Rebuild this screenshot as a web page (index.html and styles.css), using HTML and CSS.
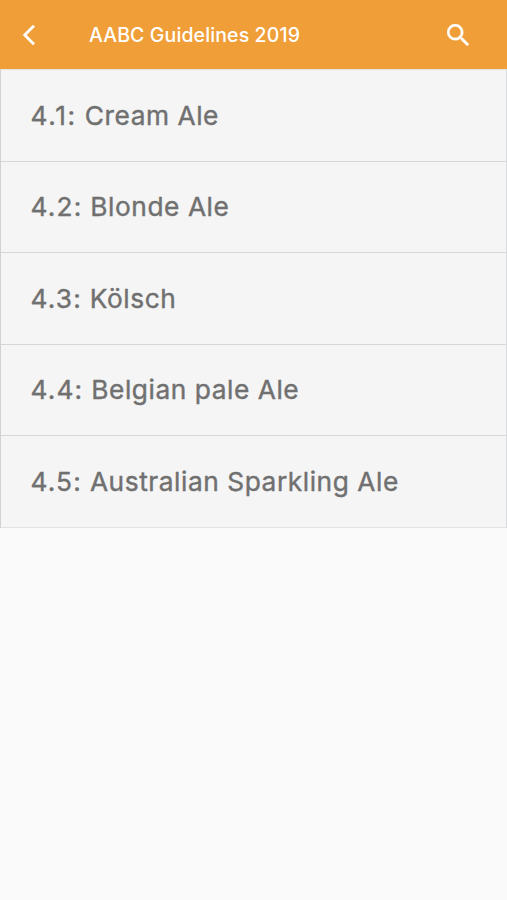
FILE: index.html
```html
<!DOCTYPE html>
<html lang="en">
<head>
<meta charset="utf-8">
<title>AABC Guidelines 2019</title>
<link rel="stylesheet" href="styles.css">
</head>
<body>
<header class="bar">
  <svg class="back" viewBox="0 0 14 22" aria-hidden="true"><path d="M12 1.8 2.7 11l9.3 9.2"/></svg>
  <h1 class="title">AABC Guidelines 2019</h1>
  <svg class="search" viewBox="3 3 17.49 17.49" aria-hidden="true"><path d="M15.5 14h-.79l-.28-.27A6.471 6.471 0 0 0 16 9.5 6.5 6.5 0 1 0 9.5 16c1.61 0 3.09-.59 4.23-1.57l.27.28v.79l5 4.99L20.49 19l-4.99-5zm-6 0C7.01 14 5 11.99 5 9.5S7.01 5 9.5 5 14 7.01 14 9.5 11.99 14 9.5 14z"/></svg>
</header>
<ul class="list">
  <li class="row"><span class="label"><span class="number narrow">4.1:</span> Cream Ale</span></li>
  <li class="row"><span class="label"><span class="number">4.2:</span> Blonde Ale</span></li>
  <li class="row"><span class="label"><span class="number">4.3:</span> Kölsch</span></li>
  <li class="row"><span class="label"><span class="number">4.4:</span> Belgian pale Ale</span></li>
  <li class="row"><span class="label"><span class="number">4.5:</span> Australian Sparkling Ale</span></li>
</ul>
</body>
</html>
```
FILE: styles.css
```css
* { box-sizing: border-box; }
body { margin: 0; min-height: 900px; background: #fafafa; font-family: Inter, sans-serif; }
.bar { display: flex; align-items: center; height: 69px; padding: 1px 38px 0 22px; background: #f09e38; color: #fff; }
.back { width: 14px; height: 22px; fill: none; stroke: #fff; stroke-width: 2.8; }
.title { margin: 0 auto 0 53px; font-size: 19.5px; font-weight: 500; line-height: 24px; letter-spacing: .12px; white-space: nowrap; }
.search { width: 22px; height: 22px; fill: #fff; stroke: #fff; stroke-width: .25; }
.list { margin: 0; padding: 0; list-style: none; border-left: 1px solid #d2d2d2; border-right: 1px solid #d8dcdc; border-top: 1px solid #e4e0dc; }
.row { display: flex; align-items: center; height: 91.6px; padding: 0 29.5px; background: #f5f5f5; border-bottom: 1px solid #d6d6d6; }
.row:last-child { border-bottom-color: #e2e2e2; }
.label { padding-top: .6px; font-size: 26.3px; font-weight: 400; line-height: 32px; letter-spacing: .55px; color: #707070; -webkit-text-stroke: .4px #707070; white-space: nowrap; }
.number { letter-spacing: 1.15px; }
.number.narrow { letter-spacing: 1.65px; }
```
